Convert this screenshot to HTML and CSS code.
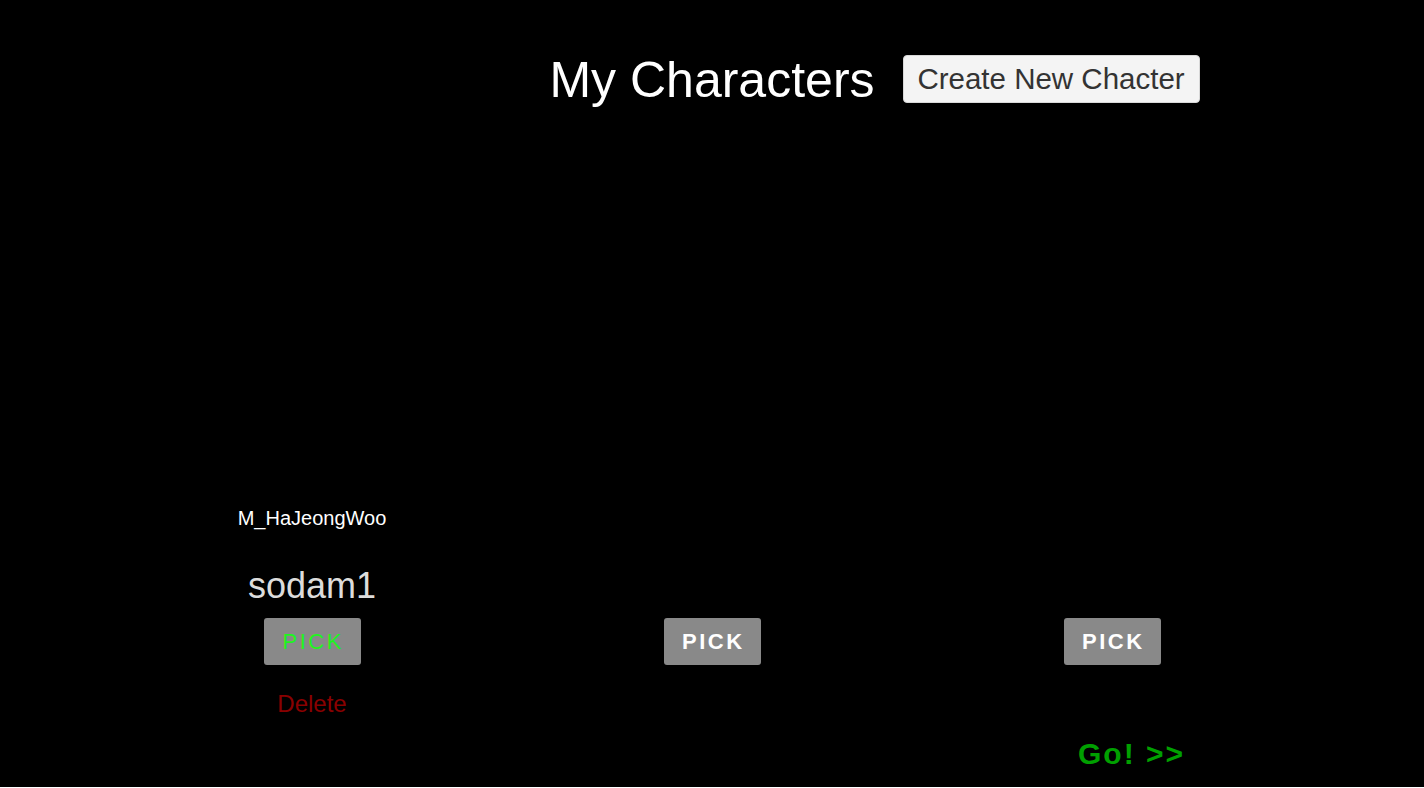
FILE: index.html
```html
<!DOCTYPE html>
<html lang="en">
<head>
<meta charset="utf-8">
<title>My Characters</title>
<link rel="stylesheet" href="styles.css">
</head>
<body>
<main class="screen">
  <header class="header">
    <div class="header-side"></div>
    <h1 class="title">My Characters</h1>
    <div class="header-side header-right">
      <button class="create-btn" type="button">Create New Chacter</button>
    </div>
  </header>

  <section class="slots">
    <div class="slot">
      <div class="slot-model">M_HaJeongWoo</div>
      <div class="slot-name">sodam1</div>
      <button class="pick-btn pick-selected" type="button">PICK</button>
      <div class="slot-delete">Delete</div>
    </div>
    <div class="slot">
      <div class="slot-model"></div>
      <div class="slot-name"></div>
      <button class="pick-btn" type="button">PICK</button>
      <div class="slot-delete"></div>
    </div>
    <div class="slot">
      <div class="slot-model"></div>
      <div class="slot-name"></div>
      <button class="pick-btn" type="button">PICK</button>
      <div class="slot-delete"></div>
    </div>
  </section>

  <footer class="footer">
    <span class="go">Go! &gt;&gt;</span>
  </footer>
</main>
</body>
</html>
```

FILE: styles.css
```css
html {
  background: #ffffff;
}

body {
  margin: 0;
  font-family: "Liberation Sans", Arial, sans-serif;
}

.screen {
  height: 787px;
  background: #000000;
  display: flex;
  flex-direction: column;
  overflow: hidden;
}

.header {
  display: grid;
  grid-template-columns: 1fr auto 1fr;
  align-items: center;
  height: 48px;
  margin-top: 55px;
}

.title {
  margin: 0;
  color: #ffffff;
  font-weight: normal;
  font-size: 50px;
  line-height: 48px;
  position: relative;
  top: 1px;
}

.header-right {
  display: flex;
  align-items: center;
  padding-left: 28px;
}

.create-btn {
  width: 297px;
  height: 48px;
  background: #f4f4f4;
  color: #333333;
  border: 1px solid #d8d8d8;
  border-radius: 4px;
  font-family: "Liberation Sans", Arial, sans-serif;
  font-size: 29.5px;
  padding: 0;
  text-align: center;
}

.slots {
  display: flex;
  justify-content: center;
  margin-top: 404px;
}

.slot {
  width: 400px;
  display: flex;
  flex-direction: column;
  align-items: center;
}

.slot-model {
  height: 23px;
  font-size: 20px;
  line-height: 23px;
  color: #ffffff;
}

.slot-name {
  margin-top: 35px;
  height: 41px;
  font-size: 36px;
  line-height: 41px;
  color: #dcdcdc;
}

.pick-btn {
  margin-top: 12px;
  width: 97px;
  height: 47px;
  background: #898989;
  border: none;
  border-radius: 3px;
  color: #ffffff;
  font-family: "Liberation Sans", Arial, sans-serif;
  font-weight: bold;
  font-size: 22px;
  letter-spacing: 2.5px;
  padding: 0 0 0 2.5px;
  text-align: center;
}

.pick-selected {
  color: #1ef51e;
  font-weight: normal;
}

.slot-delete {
  margin-top: 26px;
  height: 26px;
  font-size: 24px;
  line-height: 26px;
  color: #8a0000;
}

.footer {
  display: flex;
  justify-content: flex-end;
  padding-right: 239px;
  margin-top: 21px;
}

.go {
  color: #00a000;
  font-weight: bold;
  font-size: 30px;
  line-height: 31px;
  letter-spacing: 2px;
}
```
